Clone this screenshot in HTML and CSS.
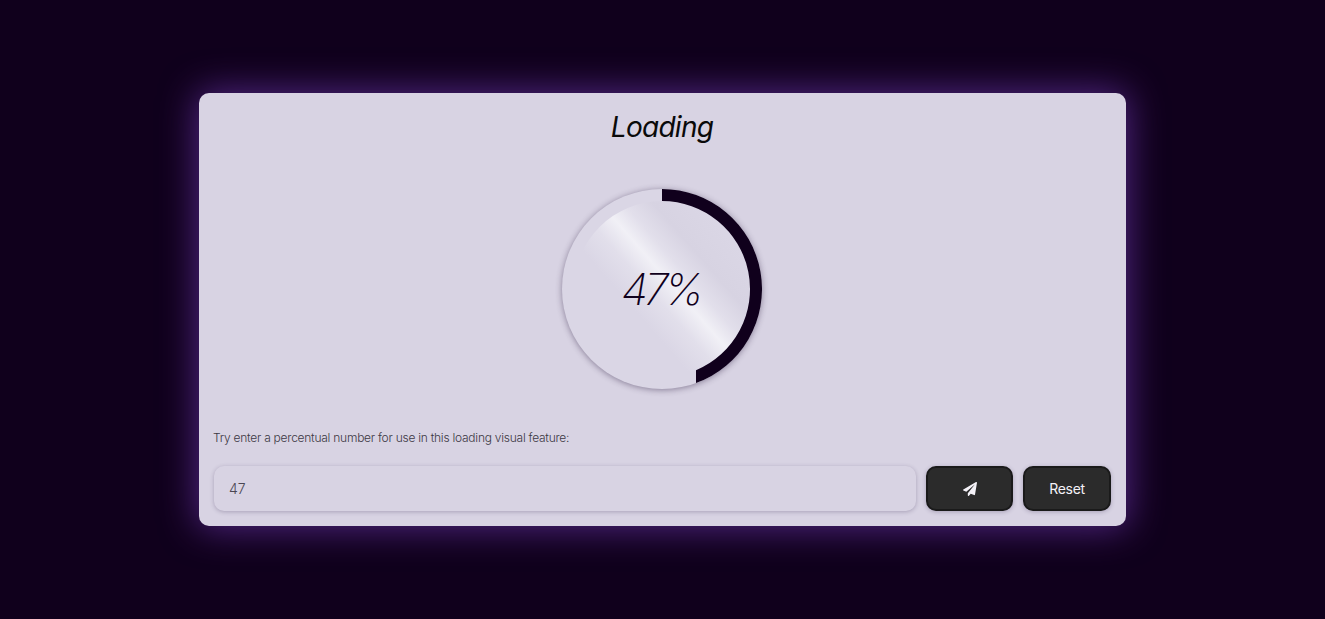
FILE: index.html
```html
<!DOCTYPE html>
<html lang="en">
<head>
    <meta charset="UTF-8">
    <meta name="viewport" content="width=device-width, initial-scale=1.0">
    <title>Loading</title>
    <link rel="stylesheet" href="styles.css">
</head>
<body>
    <main class="card">
        <h1 class="card-title">Loading</h1>

        <div class="gauge">
            <svg class="gauge-ring" viewBox="0 0 200 200" aria-hidden="true">
                <path d="M100 0A100 100 0 0 1 134 194.04L134 181.17A88 88 0 0 0 100 12Z"/>
            </svg>
            <div class="gauge-inner">
                <span class="gauge-value">47%</span>
            </div>
        </div>

        <label class="field-label" for="percent">Try enter a percentual number for use in this loading visual feature:</label>

        <div class="controls">
            <input class="percent-input" id="percent" type="text" value="47">
            <button class="btn btn-send" type="button" aria-label="Send">
                <svg class="send-icon" viewBox="0 0 512 512" aria-hidden="true">
                    <path fill="currentColor" d="M476 3.2L12.5 270.6c-18.1 10.4-15.8 35.6 2.2 43.2L121 358.4l287.3-253.2c5.5-4.9 13.3 2.6 8.6 8.3L176 407v80.5c0 23.6 28.5 32.9 42.5 15.8L282 426l124.6 52.2c14.2 6 30.4-2.9 33-18.2l72-432C515 7.8 493.3-6.8 476 3.2z"/>
                </svg>
            </button>
            <button class="btn btn-reset" type="button">Reset</button>
        </div>
    </main>
</body>
</html>
```

FILE: styles.css
```css
* {
    box-sizing: border-box;
}
html, body {
    height: 100%;
}
body {
    margin: 0;
    background-color: #10001c;
    font-family: 'Inter', 'Liberation Sans', sans-serif;
    display: flex;
    justify-content: center;
    align-items: center;
    overflow: hidden;
}
.card {
    width: 927px;
    height: 433px;
    padding: 15px 15px 15px 15px;
    background-color: #d8d3e3;
    border-radius: 10px;
    box-shadow: 0 0 36px 2px #522684;
    display: flex;
    flex-direction: column;
    align-items: center;
}
.card-title {
    margin: 0 1px 0 0;
    height: 38px;
    font-size: 28px;
    line-height: 38px;
    font-weight: 400;
    font-style: italic;
    color: #0a0a0a;
    letter-spacing: -0.75px;
}
.gauge {
    position: relative;
    width: 200px;
    height: 200px;
    margin: 43px 1px 0 0;
    flex-shrink: 0;
    border-radius: 50%;
    background-color: #dad6e5;
    box-shadow: 0 1px 6px rgba(40, 25, 60, 0.45);
    display: flex;
    justify-content: center;
    align-items: center;
}
.gauge-ring {
    position: absolute;
    top: 0;
    left: 0;
    width: 200px;
    height: 200px;
    fill: #10001c;
}
.gauge-inner {
    width: 176px;
    height: 176px;
    border-radius: 50%;
    background: linear-gradient(49deg, #dad6e5 0%, #dad6e5 36%, #e2dfeb 46%, #f1f0f6 54%, #e2dfeb 61%, #d7d3e2 70%, #dad6e5 84%, #dad6e5 100%);
    display: flex;
    justify-content: center;
    align-items: center;
}
.gauge-value {
    font-size: 44px;
    font-weight: 250;
    font-style: italic;
    color: #10001c;
    letter-spacing: -4px;
    margin-right: 3px;
}
.field-label {
    align-self: flex-start;
    margin-top: 40px;
    margin-left: -1px;
    height: 18px;
    font-size: 12px;
    line-height: 18px;
    font-weight: 300;
    color: #3c3844;
    letter-spacing: -0.25px;
}
.controls {
    align-self: stretch;
    display: flex;
    gap: 10px;
    margin-top: 19px;
    height: 45px;
}
.percent-input {
    flex: 1;
    min-width: 0;
    padding: 0 15px;
    border: none;
    outline: none;
    border-radius: 10px;
    background-color: #d8d3e3;
    box-shadow: 0 1px 4px rgba(60, 45, 85, 0.3);
    font-family: inherit;
    font-size: 14px;
    font-weight: 300;
    color: #4a4652;
}
.btn {
    height: 45px;
    border: 2px solid #1a1a1a;
    border-radius: 10px;
    background-color: #2b2b2b;
    color: #f4f2f8;
    font-family: inherit;
    font-size: 14px;
    box-shadow: 0 1px 4px rgba(60, 45, 85, 0.3);
    display: flex;
    justify-content: center;
    align-items: center;
    padding: 0;
}
.btn-send {
    width: 87px;
}
.btn-reset {
    width: 88px;
    padding-bottom: 1px;
    letter-spacing: -0.3px;
}
.send-icon {
    width: 14px;
    height: 14px;
}
```
